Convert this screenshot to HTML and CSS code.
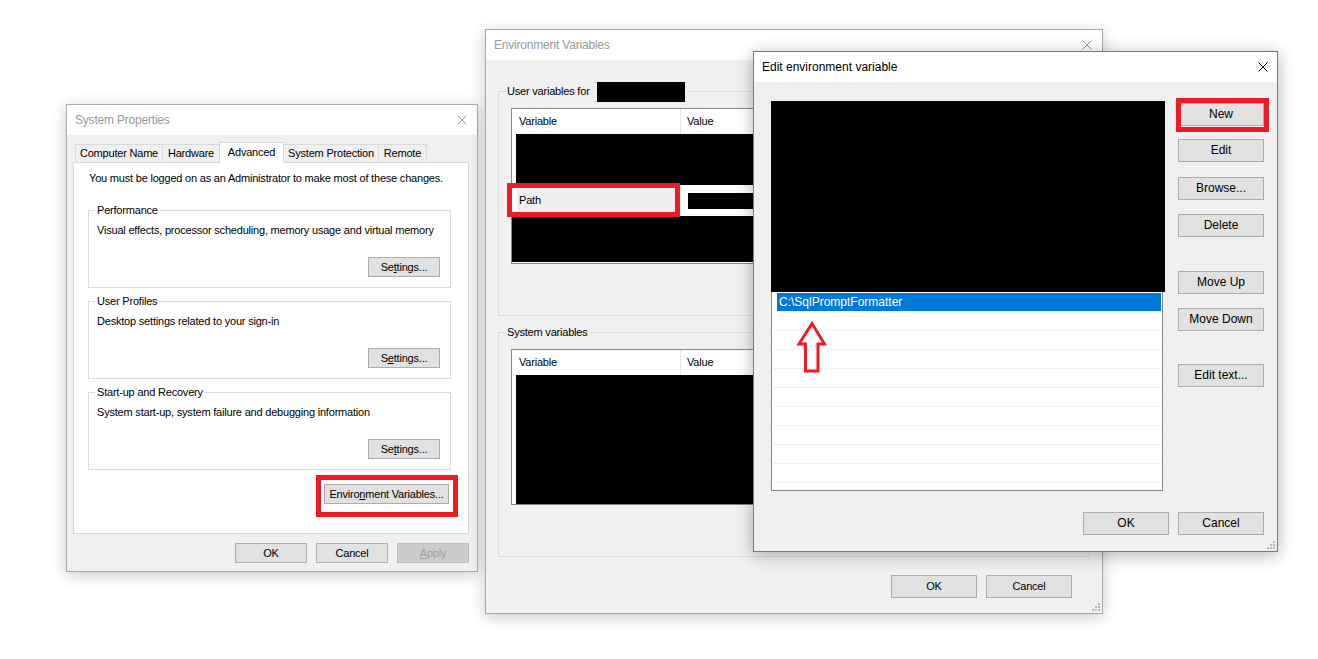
FILE: index.html
```html
<!DOCTYPE html>
<html lang="en">
<head>
<meta charset="utf-8">
<title>Environment Variables</title>
<link rel="stylesheet" href="styles.css">
</head>
<body>
<div class="desktop">

  <section class="win win-sys">
    <header class="titlebar">
      <span class="title">System Properties</span>
      <svg class="close" viewBox="0 0 10 10"><path d="M0.5 0.5L9.5 9.5M9.5 0.5L0.5 9.5"/></svg>
    </header>
    <div class="sys-body">
      <div class="tabs">
        <div class="tab tab-cn">Computer Name</div>
        <div class="tab tab-hw">Hardware</div>
        <div class="tab tab-adv selected">Advanced</div>
        <div class="tab tab-sp">System Protection</div>
        <div class="tab tab-rm">Remote</div>
      </div>
      <div class="tab-panel">
        <p class="intro">You must be logged on as an Administrator to make most of these changes.</p>
        <div class="group sys-group first">
          <span class="group-label">Performance</span>
          <p class="group-desc">Visual effects, processor scheduling, memory usage and virtual memory</p>
          <button class="btn btn-settings">Se<u>t</u>tings...</button>
        </div>
        <div class="group sys-group">
          <span class="group-label">User Profiles</span>
          <p class="group-desc">Desktop settings related to your sign-in</p>
          <button class="btn btn-settings">S<u>e</u>ttings...</button>
        </div>
        <div class="group sys-group">
          <span class="group-label">Start-up and Recovery</span>
          <p class="group-desc">System start-up, system failure and debugging information</p>
          <button class="btn btn-settings">Se<u>t</u>tings...</button>
        </div>
        <div class="callout env-callout">
          <button class="btn btn-env">Enviro<u>n</u>ment Variables...</button>
        </div>
      </div>
      <div class="dialog-buttons sys-buttons">
        <button class="btn">OK</button>
        <button class="btn">Cancel</button>
        <button class="btn disabled"><u>A</u>pply</button>
      </div>
    </div>
  </section>

  <section class="win win-env">
    <header class="titlebar">
      <span class="title">Environment Variables</span>
      <svg class="close" viewBox="0 0 10 10"><path d="M0.5 0.5L9.5 9.5M9.5 0.5L0.5 9.5"/></svg>
    </header>
    <div class="env-body">
      <div class="group env-group">
        <span class="group-label">User variables for<span class="redact redact-name"></span></span>
        <div class="listview">
          <div class="lv-header">
            <div class="lv-col lv-col-var">Variable</div>
            <div class="lv-col">Value</div>
          </div>
          <div class="redact redact-a"></div>
          <div class="lv-row">
            <div class="lv-cell-path">Path</div>
            <div class="redact redact-value"></div>
          </div>
          <div class="redact redact-b"></div>
        </div>
      </div>
      <div class="group env-group env-group-sys">
        <span class="group-label">System variables</span>
        <div class="listview listview-sys">
          <div class="lv-header">
            <div class="lv-col lv-col-var">Variable</div>
            <div class="lv-col">Value</div>
          </div>
          <div class="redact redact-fill"></div>
        </div>
      </div>
      <div class="dialog-buttons env-buttons">
        <button class="btn btn-lg">OK</button>
        <button class="btn btn-lg">Cancel</button>
      </div>
    </div>
    <svg class="grip" viewBox="0 0 8 8"><rect x="6" y="0" width="2" height="2"/><rect x="3" y="3" width="2" height="2"/><rect x="6" y="3" width="2" height="2"/><rect x="0" y="6" width="2" height="2"/><rect x="3" y="6" width="2" height="2"/><rect x="6" y="6" width="2" height="2"/></svg>
  </section>

  <section class="win win-edit">
    <header class="titlebar">
      <span class="title">Edit environment variable</span>
      <svg class="close" viewBox="0 0 10 10"><path d="M0.5 0.5L9.5 9.5M9.5 0.5L0.5 9.5"/></svg>
    </header>
    <div class="edit-body">
      <div class="edit-main">
        <div class="edit-list">
          <div class="redact redact-paths"></div>
          <div class="edit-rows">
            <div class="edit-row selected">C:\SqlPromptFormatter</div>
            <div class="edit-row"></div>
            <div class="edit-row"></div>
            <div class="edit-row"></div>
            <div class="edit-row"></div>
            <div class="edit-row"></div>
            <div class="edit-row"></div>
            <div class="edit-row"></div>
            <div class="edit-row"></div>
            <div class="edit-row"></div>
            <div class="edit-row"></div>
          </div>
        </div>
        <div class="edit-side">
          <button class="btn btn-lg b-new">New</button>
          <button class="btn btn-lg b-edit">Edit</button>
          <button class="btn btn-lg b-browse">Browse...</button>
          <button class="btn btn-lg b-delete">Delete</button>
          <button class="btn btn-lg b-up">Move Up</button>
          <button class="btn btn-lg b-down">Move Down</button>
          <button class="btn btn-lg b-text">Edit text...</button>
        </div>
      </div>
      <div class="dialog-buttons edit-buttons">
        <button class="btn btn-lg">OK</button>
        <button class="btn btn-lg">Cancel</button>
      </div>
    </div>
    <svg class="grip" viewBox="0 0 8 8"><rect x="6" y="0" width="2" height="2"/><rect x="3" y="3" width="2" height="2"/><rect x="6" y="3" width="2" height="2"/><rect x="0" y="6" width="2" height="2"/><rect x="3" y="6" width="2" height="2"/><rect x="6" y="6" width="2" height="2"/></svg>
  </section>

  <div class="mark mark-path"></div>
  <div class="mark mark-new"></div>
  <svg class="mark-arrow" viewBox="790 315 45 62"><polygon points="812,323.5 799,344 805.5,344 805.5,371 818,371 818,344 824.5,344"/></svg>

</div>
</body>
</html>
```

FILE: styles.css
```css
* { box-sizing: border-box; }
html, body { margin: 0; padding: 0; background: #fff; }
body { font-family: "Liberation Sans", Arial, sans-serif; color: #000; }
p { margin: 0; }
u { text-decoration: underline; text-underline-offset: 1px; }

.desktop { position: relative; width: 1318px; height: 659px; overflow: hidden; background: #fff; }

/* windows */
.win { position: absolute; display: flex; flex-direction: column; background: #f0f0f0; border: 1px solid #aaaaaa; box-shadow: 0 3px 14px rgba(0, 0, 0, 0.22); }
.win-sys { left: 66px; top: 104px; width: 412px; height: 468px; font-size: 11px; letter-spacing: -0.2px; }
.win-env { left: 485px; top: 29px; width: 618px; height: 585px; font-size: 11px; letter-spacing: -0.2px; }
.win-edit { left: 753px; top: 51px; width: 525px; height: 501px; font-size: 12px; border-color: #7a7a7a; box-shadow: 0 3px 16px rgba(0, 0, 0, 0.3); }

.titlebar { flex: none; height: 30px; display: flex; align-items: center; justify-content: space-between; padding: 0 10px 0 8px; background: #fff; font-size: 12px; }
.title { color: #999; }
.win-edit .titlebar { padding-right: 9px; }
.win-edit .title { color: #000; letter-spacing: 0; }
.close { width: 10px; height: 10px; fill: none; stroke: #9a9a9a; stroke-width: 1; }
.win-edit .close { stroke: #000; }

.grip { position: absolute; right: 2px; bottom: 2px; width: 8px; height: 8px; fill: #b8b8b8; }

/* buttons */
.btn { display: block; width: 72px; height: 20px; margin: 0; padding: 0; font: inherit; letter-spacing: inherit; line-height: 18px; text-align: center; white-space: nowrap; color: #000; background: #e1e1e1; border: 1px solid #adadad; border-radius: 0; }
.btn.disabled { background: #cccccc; border-color: #bfbfbf; color: #a0a0a0; }
.btn-lg { width: 86px; height: 23px; line-height: 21px; }
.dialog-buttons { display: flex; justify-content: flex-end; gap: 9px; }

/* system properties */
.sys-body { flex: 1; display: flex; flex-direction: column; padding: 7px 8px 0 6px; }
.tabs { display: flex; align-items: flex-end; height: 20px; padding-left: 2px; }
.tab { height: 18px; line-height: 17px; margin-left: -1px; border: 1px solid #d9d9d9; border-bottom: none; background: #f0f0f0; text-align: center; white-space: nowrap; }
.tab:first-child { margin-left: 0; }
.tab.selected { height: 21px; line-height: 18px; margin-bottom: -1px; background: #fff; position: relative; z-index: 1; }
.tab-cn { width: 88px; }
.tab-hw { width: 58px; }
.tab-adv { width: 65px; }
.tab-sp { width: 96px; }
.tab-rm { width: 49px; }

.tab-panel { height: 372px; display: flex; flex-direction: column; background: #fff; border: 1px solid #d9d9d9; }
.intro { margin: 8px 0 0 15px; line-height: 15px; }

.group { display: flex; flex-direction: column; border: 1px solid #dcdcdc; }
.group-label { align-self: flex-start; margin: -8px 0 0 6px; padding: 0 2px; line-height: 14px; background: #fff; white-space: nowrap; }
.sys-group { width: 363px; height: 78px; margin: 13px 0 0 14px; }
.sys-group.first { margin-top: 24px; }
.group-desc { margin: 6px 0 0 8px; line-height: 15px; }
.btn-settings { margin: auto 10px 10px 0; align-self: flex-end; }

.callout { border: 5px solid #ed1c24; }
.env-callout { align-self: flex-end; margin: 5px 10px 0 0; padding: 4px 4px 8px 3px; }
.btn-env { width: 125px; }

.sys-buttons { margin-top: 9px; }

/* environment variables */
.env-body { flex: 1; display: flex; flex-direction: column; padding: 31px 12px 0 12px; }
.env-group { height: 225px; }
.env-group .group-label { background: #f0f0f0; }
.env-group-sys { margin-top: 16px; }
.redact { background: #000; }
.redact-name { display: inline-block; width: 88px; height: 20px; margin: -3px 0 -3px 7px; vertical-align: middle; }

.listview { height: 156px; margin: 9px 12px 0 12px; display: flex; flex-direction: column; background: #fff; border: 1px solid #828790; overflow: hidden; }
.listview-sys { margin-top: 10px; }
.lv-header { flex: none; display: flex; height: 25px; line-height: 25px; }
.lv-col { padding-left: 6px; }
.lv-col-var { width: 169px; padding-left: 7px; border-right: 1px solid #e5e5e5; }
.redact-a { height: 51px; margin-left: 4px; flex: none; }
.lv-row { flex: none; display: flex; align-items: center; height: 23px; margin-top: 4px; }
.lv-cell-path { width: 159px; height: 23px; margin-left: 5px; padding-left: 2px; line-height: 23px; background: #efefef; }
.redact-value { flex: 1; height: 16px; margin-left: 12px; }
.redact-b { height: 46px; margin-top: 4px; flex: none; }
.redact-fill { flex: 1; margin-left: 4px; }

.env-buttons { margin-top: 18px; padding-right: 18px; }

/* edit environment variable */
.edit-body { flex: 1; display: flex; flex-direction: column; padding: 19px 13px 0 17px; }
.edit-main { display: flex; }
.edit-list { width: 392px; height: 390px; background: #fff; border: 1px solid #828790; }
.redact-paths { height: 191px; margin: -1px -3px 0 -1px; }
.edit-rows { height: 198px; padding-top: 1px; overflow: hidden; }
.edit-row { height: 19px; margin: 0 1px; border-bottom: 1px solid #f0f0f0; line-height: 18px; }
.edit-row.selected { margin-left: 5px; padding-left: 2px; background: #0078d7; color: #fff; }

.edit-side { display: flex; flex-direction: column; width: 86px; margin-left: 15px; }
.b-new { margin-top: 2px; }
.b-edit { margin-top: 13px; }
.b-browse { margin-top: 15px; }
.b-delete { margin-top: 14px; }
.b-up { margin-top: 34px; }
.b-down { margin-top: 14px; }
.b-text { margin-top: 33px; }

.edit-buttons { margin-top: 21px; }

/* annotations */
.mark { position: absolute; border: 5px solid #ed1c24; }
.mark-path { left: 507px; top: 183px; width: 173px; height: 34px; }
.mark-new { left: 1176px; top: 98px; width: 93px; height: 34px; }
.mark-arrow { position: absolute; left: 790px; top: 315px; width: 45px; height: 62px; fill: none; stroke: #ed1c24; stroke-width: 3; }
```
